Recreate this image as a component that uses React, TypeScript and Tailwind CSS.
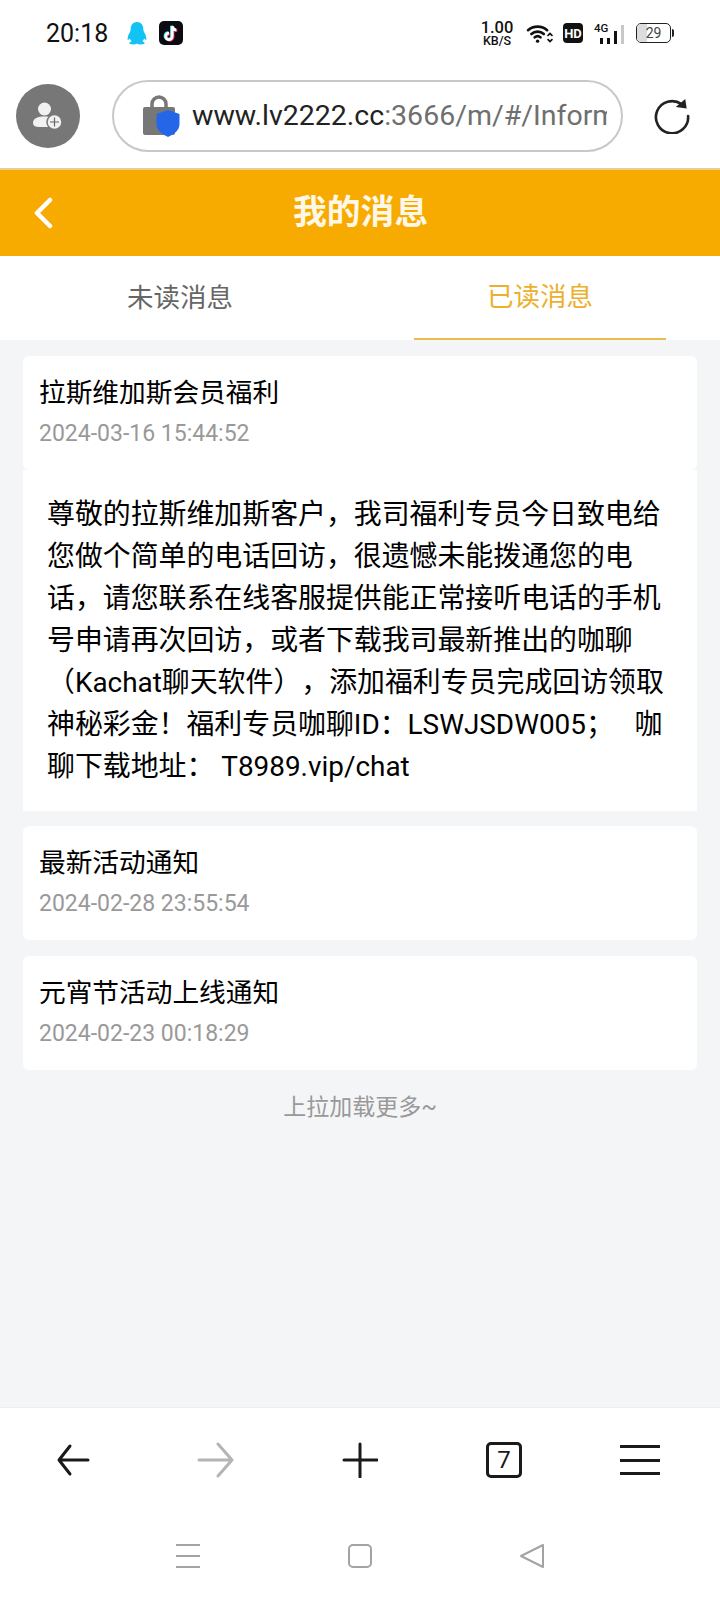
import React from 'react';

const FONT = 'font-[Roboto,"Noto_Sans_CJK_SC",sans-serif]';

function QQIcon() {
  return (
    <svg width="22" height="24" viewBox="0 0 22 24" fill="#12c3f4">
      <path d="M11 1c-4 0-6.300 3-6.300 7 0 1-.2 2-.7 3-1.200 2-2.400 4.500-2.400 7 0 1 .5 1.300 1.100.6l1.100-1.200c.4 1.200 1 2.100 1.800 2.800-1.500.5-2.300 1.300-2.300 2.100 0 .7 1.500 1.200 3.700 1.200 1.700 0 3.100-.4 4-1 .9.600 2.300 1 4 1 2.200 0 3.700-.5 3.700-1.200 0-.8-.8-1.600-2.300-2.100.8-.7 1.400-1.600 1.800-2.800l1.100 1.200c.6.700 1.100.4 1.100-.6 0-2.500-1.200-5-2.400-7-.5-1-.7-2-.7-3 0-4-2.300-7-6.300-7z" />
    </svg>
  );
}

function TikTokIcon() {
  return (
    <div className="flex h-6 w-6 items-center justify-center rounded-[5px] bg-[#0b0b12]">
      <svg width="20" height="20" viewBox="0 0 16 16" fill="none" strokeWidth="2.200">
        <path d="M9 2.500v8.200a2.600 2.600 0 1 1-2.600-2.600M9 2.500c.3 1.800 1.500 3 3.300 3.200" stroke="#ee1d52" transform="translate(.7 .5)" />
        <path d="M9 2.500v8.200a2.600 2.600 0 1 1-2.600-2.600M9 2.500c.3 1.800 1.500 3 3.300 3.200" stroke="#25f4ee" transform="translate(-.6 -.4)" />
        <path d="M9 2.500v8.200a2.600 2.600 0 1 1-2.600-2.600M9 2.500c.3 1.800 1.500 3 3.300 3.200" stroke="#fff" />
      </svg>
    </div>
  );
}

function StatusRight() {
  return (
    <div className="flex items-center">
      <div className="flex w-[32px] flex-col items-center text-[#111]">
        <span className="text-[16.500px] font-medium leading-[13px]">1.00</span>
        <span className="mt-px text-[12.500px] font-medium leading-[11px]">KB/S</span>
      </div>
      <svg className="ml-[13px]" width="27" height="21" viewBox="0 0 27 22" fill="none" stroke="#111" strokeWidth="2.800" strokeLinecap="round">
        <path d="M1.500 7.500C7 2.500 16 2.500 21.500 7.500" />
        <path d="M5 11.500c3.600-3.200 9.400-3.200 13 0" />
        <path d="M8.500 15c1.800-1.500 4.200-1.500 6 0" />
        <circle cx="11.500" cy="19" r="1.800" fill="#111" stroke="none" />
        <path d="M22.500 13l2-2 2 2M22.500 17.500l2 2 2-2" strokeWidth="1.800" />
      </svg>
      <div className="ml-[10px] flex h-5 w-5 items-center justify-center rounded-[4px] bg-[#111] text-[13px] leading-none font-bold text-white">
        HD
      </div>
      <div className="relative ml-[11px] h-[21px] w-[30px]">
        <span className="absolute top-0 left-0 text-[11.500px] leading-[11px] font-medium text-[#111]">4G</span>
        <div className="absolute right-0 bottom-0 flex items-end gap-[4px]">
          <div className="h-[6px] w-[3px] bg-[#111]" />
          <div className="h-[6px] w-[3px] bg-[#111]" />
          <div className="h-[13px] w-[3px] bg-[#111]" />
          <div className="h-[19px] w-[3px] bg-[#c8c8c8]" />
        </div>
      </div>
      <div className="ml-[12px] flex items-center">
        <div className="relative flex h-5 w-[35px] items-center justify-center overflow-hidden rounded-[5px] border-[1.500px] border-[#222]">
          <div className="absolute inset-y-0 left-0 w-[29%] bg-[#dcdcdc]" />
          <span className="relative text-[14px] leading-none text-[#444]">29</span>
        </div>
        <div className="ml-px h-2 w-[2px] rounded-r bg-[#222]" />
      </div>
    </div>
  );
}

function AddressBar() {
  return (
    <div className="flex h-[98px] items-center bg-white pr-[30px] pb-[6px] pl-4">
      <div className="flex h-16 w-16 shrink-0 items-center justify-center rounded-full bg-[#777]">
        <svg width="32" height="28" viewBox="0 0 32 28">
          <circle cx="12.500" cy="7" r="6.500" fill="#f1f1f1" />
          <path d="M1 21c0-5 5-6.500 11.500-6.500S20 15.500 22 17v8H7c-4 0-6-1.500-6-4z" fill="#f1f1f1" />
          <circle cx="22.500" cy="20" r="7.500" fill="#f1f1f1" stroke="#777" strokeWidth="1.500" />
          <path d="M22.500 15.500v9M18 20h9" stroke="#666" strokeWidth="1.200" />
        </svg>
      </div>
      <div className="ml-[32px] flex h-[72px] min-w-0 w-[511px] items-center rounded-full border-2 border-[#c8c8c8] pr-[14px] pl-[29px]">
        <svg className="shrink-0" width="37" height="42" viewBox="0 0 37 42">
          <path d="M9 14V9a7 7 0 0 1 14 0v5" fill="none" stroke="#777" strokeWidth="3.500" />
          <rect x="0" y="12" width="32" height="28" rx="2" fill="#777" />
          <path d="M25 15l11.500 4v10c0 6-5 10-11.500 13-6.500-3-11.500-7-11.500-13V19z" fill="#2566e8" />
        </svg>
        <div className="ml-[12px] overflow-hidden text-[28.500px] leading-none whitespace-nowrap text-[#6f6f6f]">
          <span className="text-[#222]">www.lv2222.cc</span>:3666/m/#/Information
        </div>
      </div>
      <svg className="ml-auto" width="36" height="36" viewBox="0 0 38 38" fill="none">
        <path d="M29 6.500A17 17 0 1 0 36 19" stroke="#222" strokeWidth="2.800" strokeLinecap="round" />
        <path d="M23 9.500l11.500 1.500L33 1z" fill="#222" />
      </svg>
    </div>
  );
}

function MessageCard({ title, time }: { title: string; time: string }) {
  return (
    <div className="h-[114px] rounded-[6px] bg-white px-4 pt-[18px]">
      <div className="text-[26.700px] leading-[38px] text-black">{title}</div>
      <div className="mt-[4px] text-[23px] leading-[36px] text-[#999]">{time}</div>
    </div>
  );
}

export default function App() {
  return (
    <div className={`flex h-[1600px] w-[720px] flex-col overflow-hidden bg-[#f4f5f7] ${FONT}`}>
      <div className="flex h-[70px] items-center justify-between bg-white pr-[46px] pb-[4px] pl-[46px]">
        <div className="flex items-center">
          <span className="text-[25px] leading-none text-[#111]">20:18</span>
          <span className="ml-[18px]"><QQIcon /></span>
          <span className="ml-[11px]"><TikTokIcon /></span>
        </div>
        <StatusRight />
      </div>
      <AddressBar />

      <div className="flex h-[88px] items-center border-t-2 border-[#e8cf93] bg-[#f7ab00]">
        <svg className="ml-[33px]" width="22" height="32" viewBox="0 0 22 32" fill="none" stroke="#fff" strokeWidth="4.500" strokeLinecap="round" strokeLinejoin="round">
          <path d="M17 3L4 16l13 13" />
        </svg>
        <div className="ml-[238px] text-[33.800px] leading-none font-bold text-[#fff8e8]">我的消息</div>
      </div>

      <div className="flex h-[84px] bg-white">
        <div className="flex w-[360px] items-center justify-center text-[26.500px] text-[#666]">未读消息</div>
        <div className="ml-[54px] flex h-full w-[252px] items-center justify-center border-b-2 border-[#ecbc4a] text-[26.500px] text-[#ecb02c]">
          已读消息
        </div>
      </div>

      <div className="flex-1 px-[23px] pt-[16px]">
        <MessageCard title="拉斯维加斯会员福利" time="2024-03-16 15:44:52" />
        <div className="h-[341px] bg-white pt-[24px] pr-[24px] pl-[24px] text-[27.900px] leading-[42px] text-black [text-spacing-trim:space-all]">
          尊敬的拉斯维加斯客户，我司福利专员今日致电给您做个简单的电话回访，很遗憾未能拨通您的电话，请您联系在线客服提供能正常接听电话的手机号申请再次回访，或者下载我司最新推出的咖聊（Kachat聊天软件），添加福利专员完成回访领取神秘彩金！福利专员咖聊ID：LSWJSDW005；&nbsp;&nbsp;&nbsp;咖聊下载地址：&nbsp;T8989.vip/chat
        </div>
        <div className="mt-[15px] flex flex-col gap-[16px]">
          <MessageCard title="最新活动通知" time="2024-02-28 23:55:54" />
          <MessageCard title="元宵节活动上线通知" time="2024-02-23 00:18:29" />
        </div>
        <div className="mt-[22px] text-center text-[23px] leading-[32px] text-[#999]">上拉加载更多~</div>
      </div>

      <div className="flex h-[193px] flex-col border-t border-[#eeeeee] bg-white">
        <div className="flex h-[104px] items-center">
          <svg className="ml-[56px]" width="34" height="34" viewBox="0 0 34 34" fill="none" stroke="#1a1a1a" strokeWidth="3" strokeLinecap="round" strokeLinejoin="round">
            <path d="M32 17H3M14 3L3 17l11 14" />
          </svg>
          <svg className="ml-[107px]" width="38" height="36" viewBox="0 0 38 36" fill="none" stroke="#b4b4b4" strokeWidth="3" strokeLinecap="round" strokeLinejoin="round">
            <path d="M2 18h33M21 2l14 16-14 16" />
          </svg>
          <svg className="ml-[107px]" width="36" height="36" viewBox="0 0 36 36" fill="none" stroke="#1a1a1a" strokeWidth="3" strokeLinecap="round">
            <path d="M18 2v33M2 18h33" />
          </svg>
          <div className="ml-[108px] flex h-[36px] w-[36px] items-center justify-center rounded-[5px] border-[3px] border-[#1a1a1a] text-[24px] leading-none text-[#1a1a1a]">
            7
          </div>
          <div className="ml-[98px] flex h-[30px] w-[40px] flex-col justify-between">
            <div className="h-[3px] bg-[#1a1a1a]" />
            <div className="h-[3px] bg-[#1a1a1a]" />
            <div className="h-[3px] bg-[#1a1a1a]" />
          </div>
        </div>
        <div className="flex items-center pt-[31px]">
          <div className="ml-[176px] flex h-[24px] w-[24px] flex-col justify-between">
            <div className="h-[2px] bg-[#a3a3a3]" />
            <div className="h-[2px] bg-[#a3a3a3]" />
            <div className="h-[2px] bg-[#a3a3a3]" />
          </div>
          <div className="ml-[148px] h-[24px] w-[24px] rounded-[5px] border-2 border-[#a3a3a3]" />
          <svg className="ml-[147px]" width="26" height="26" viewBox="0 0 26 26" fill="none" stroke="#a3a3a3" strokeWidth="2" strokeLinejoin="round">
            <path d="M24 2v22L2 13z" />
          </svg>
        </div>
      </div>
    </div>
  );
}
